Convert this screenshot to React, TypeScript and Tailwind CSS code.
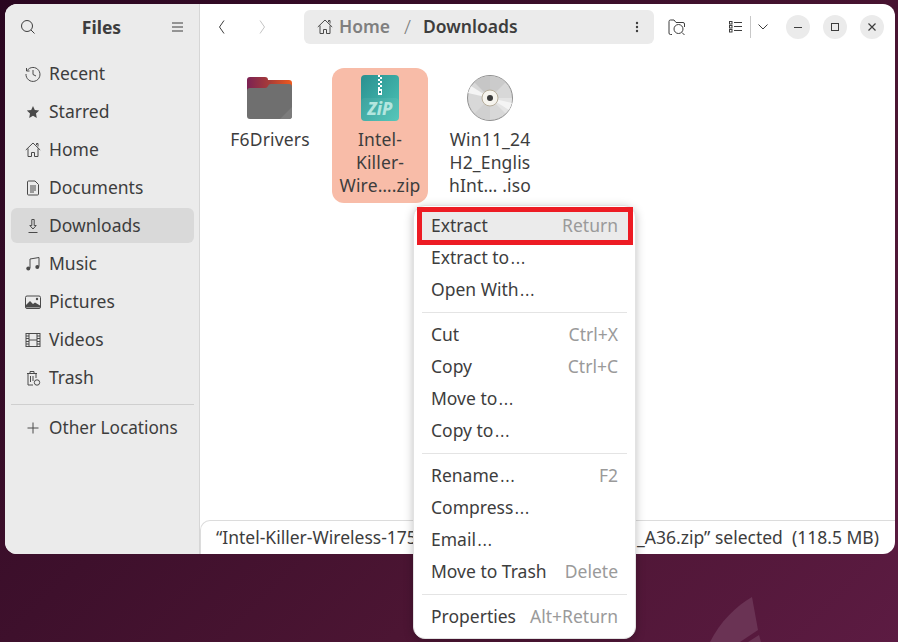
import React from "react";

const FONT = "font-['Noto_Sans',sans-serif]";

function Ico({ children, size = 16 }: { children: React.ReactNode; size?: number }) {
  return (
    <svg width={size} height={size} viewBox="0 0 16 16" fill="none" stroke="#4a4a4a" strokeWidth="1" className="shrink-0">
      {children}
    </svg>
  );
}

const homePaths = (<><path d="M.8 8L8 1l7.200 7" /><path d="M11.500 3V1.500H13V4.500" /><path d="M3 6.500v8h3.500v-4h3v4H13v-8" /></>);

const sideIcons: Record<string, React.ReactNode> = {
  Recent: (<><path d="M2.200 4.500A7 7 0 1 1 1 8" /><path d="M1.500 2v3h3" /><path d="M8 4v4.500l3 1.500" /></>),
  Starred: (<path d="M8 2l1.800 4 4.400.5-3.200 3 .8 4.500L8 11.800 4.200 14l.8-4.500-3.200-3L6.200 6z" fill="#4a4a4a" stroke="none" />),
  Home: homePaths,
  Documents: (<><path d="M2.500 2a1 1 0 0 1 1-1H10l3.500 3.500V14a1 1 0 0 1-1 1h-9a1 1 0 0 1-1-1z" /><path d="M5 6h6M5 8h6M5 10h6M5 12h4" /></>),
  Downloads: (<><path d="M6.800 1.500h2.400v6h2L8 11 4.800 7.500h2z" /><path d="M3.500 14.500h9" /></>),
  Music: (<><path d="M5 12V3l9-1.500V10.500" /><circle cx="3.300" cy="12.500" r="2" fill="#4a4a4a" stroke="none" /><circle cx="12.300" cy="11" r="2" fill="#4a4a4a" stroke="none" /></>),
  Pictures: (<><rect x=".5" y="2" width="15" height="12.500" rx="1.500" /><path d="M1 13.500V11l4-4 3 3 2-1.500 5 3v2z" fill="#4a4a4a" stroke="none" /><circle cx="12" cy="5" r="1.200" fill="#4a4a4a" stroke="none" /></>),
  Videos: (<><rect x="1" y="1.500" width="14" height="13" /><path d="M4 1.500v13M12 1.500v13M4 8h8M1 4h3M1 6.500h3M1 9.500h3M1 12h3M12 4h3M12 6.500h3M12 9.500h3M12 12h3" /></>),
  Trash: (<><path d="M2 3.500h10M5 3.500V1.500h4v2M3 3.500V15h5M11 3.500V8" /><path d="M5.500 6v6M8 6v5" /><circle cx="12" cy="12.500" r="2.700" /></>),
};

const places = ["Recent", "Starred", "Home", "Documents", "Downloads", "Music", "Pictures", "Videos", "Trash"];

function Ell({ text }: { text: string }) {
  const i = text.indexOf("…");
  if (i < 0) return <span>{text}</span>;
  return (
    <span>
      {text.slice(0, i)}
      <span className="text-[21px] font-light leading-[0] mx-[1px]">…</span>
      {text.slice(i + 1)}
    </span>
  );
}

function SideRow({ name }: { name: string }) {
  const on = name === "Downloads";
  return (
    <div className={`h-[35px] mb-[3px] flex items-center pl-[14px] gap-[8px] rounded-[6px] ${on ? "bg-[#d9d9d9]" : ""}`}>
      <Ico>{sideIcons[name]}</Ico>
      <span>{name}</span>
    </div>
  );
}

function FileItem({ icon, lines, selected }: { icon: React.ReactNode; lines: string[]; selected?: boolean }) {
  return (
    <div className={`w-[96px] h-[135px] rounded-[12px] flex flex-col items-center pt-[3px] ${selected ? "bg-[#f8bca8]" : ""}`}>
      <div className="h-[54px] w-[54px] flex items-center justify-center">{icon}</div>
      <div className="mt-[3px] text-center leading-[23px]">
        {lines.map((l) => (<div key={l} className="whitespace-pre h-[23px] tracking-[0.15px]">{l}</div>))}
      </div>
    </div>
  );
}

const FolderIcon = (
  <svg width="48" height="44" viewBox="0 0 48 44">
    <defs>
      <linearGradient id="fb" x1="0" x2="1" y1="0" y2="0">
        <stop offset="0" stopColor="#7b2254" />
        <stop offset=".5" stopColor="#a83c38" />
        <stop offset="1" stopColor="#ee5a1e" />
      </linearGradient>
    </defs>
    <path d="M1 4a3 3 0 0 1 3-3h15a3 3 0 0 1 3 3h21a3 3 0 0 1 3 3v13H1z" fill="url(#fb)" />
    <path d="M1 15a3 3 0 0 1 3-3h15a3 3 0 0 0 3-2 3 3 0 0 1 3-2h18a3 3 0 0 1 3 3v29a3 3 0 0 1-3 3H4a3 3 0 0 1-3-3z" fill="#6f6f6f" />
    <path d="M46 31v9a3 3 0 0 1-3 3H34z" fill="#7c7c7c" />
  </svg>
);

const ZipIcon = (
  <svg width="40" height="48" viewBox="0 0 40 48">
    <defs>
      <linearGradient id="zb" x1="0" x2="1" y1="0" y2="1">
        <stop offset="0" stopColor="#2a9090" />
        <stop offset="1" stopColor="#4cc4b6" />
      </linearGradient>
    </defs>
    <rect x="1" y="1" width="38" height="46" rx="4" fill="url(#zb)" />
    <rect x="1" y="24" width="38" height="23" rx="4" fill="#fff" opacity=".06" />
    <path d="M18 1h2v2h-2zM20 3h2v2h-2zM18 5h2v2h-2zM20 7h2v2h-2zM18 9h2v2h-2zM20 11h2v2h-2zM18 13h2v2h-2z" fill="#fff" />
    <rect x="18" y="15" width="4" height="6" fill="#fff" />
    <rect x="19" y="17" width="2" height="2" fill="#2a8a8a" />
    <text x="20" y="41" textAnchor="middle" fontSize="17" fontWeight="800" fontStyle="italic" fill="#b4e6df" fontFamily="Noto Sans, sans-serif">ZiP</text>
  </svg>
);

const DiscIcon = (
  <svg width="48" height="48" viewBox="0 0 48 48">
    <circle cx="24" cy="24" r="22.500" fill="#d8d8d8" stroke="#8f8f8f" strokeWidth="1" />
    <path d="M24 2a22 22 0 0 1 15.500 6.500L24 24z" fill="#cbcbcb" />
    <path d="M8.500 8.500A22 22 0 0 1 24 2V24z" fill="#c6c6c6" />
    <path d="M46 24a22 22 0 0 1-6.500 15.500L24 24z" fill="#e4e4e4" />
    <path d="M24 46a22 22 0 0 1-15.500-6.500L24 24z" fill="#d0d0d0" />
    <path d="M5 12L24 24 2 19z" fill="#f4f4f4" />
    <path d="M43 36L24 24l22 5z" fill="#f4f4f4" />
    <circle cx="24" cy="24" r="8" fill="#f6f4ee" stroke="#b7ae9c" />
    <circle cx="24" cy="24" r="3" fill="#3c3c3c" />
  </svg>
);

function HeaderIconBtn({ children }: { children: React.ReactNode }) {
  return <div className="w-[24px] h-[24px] rounded-full bg-[#ebebeb] flex items-center justify-center">{children}</div>;
}

type MI = { label: string; key?: string };
const groups: MI[][] = [
  [{ label: "Extract", key: "Return" }, { label: "Extract to…" }, { label: "Open With…" }],
  [{ label: "Cut", key: "Ctrl+X" }, { label: "Copy", key: "Ctrl+C" }, { label: "Move to…" }, { label: "Copy to…" }],
  [{ label: "Rename…", key: "F2" }, { label: "Compress…" }, { label: "Email…" }, { label: "Move to Trash", key: "Delete" }],
  [{ label: "Properties", key: "Alt+Return" }],
];

export default function App() {
  return (
    <div className={`${FONT} relative w-[898px] h-[642px] overflow-hidden pt-[4px] pl-[5px] text-[#3d3d3d] text-[17.5px] bg-[linear-gradient(135deg,#2a0620_0%,#3e102c_42%,#4c1533_67%,#5c1b42_100%)]`}>
      {/* wallpaper shape */}
      <svg className="absolute left-[690px] top-[580px]" width="100" height="62" viewBox="0 0 100 62">
        <path d="M62 17 C46 26 30 42 20 62 L50 62 L68 50 Z" fill="#6a3354" />
        <path d="M58 62 L69 55 L71 62 Z" fill="#6a3354" />
      </svg>

      {/* window */}
      <div className="relative w-[890px] h-[550px] rounded-[12px] overflow-hidden flex bg-white">
        {/* sidebar */}
        <div className="w-[195px] shrink-0 bg-[#ebebeb] border-r border-[#d6d6d6] flex flex-col">
          <div className="h-[46px] flex items-center justify-between pl-[16px] pr-[16px]">
            <svg width="14" height="14" viewBox="0 0 14 14" fill="none" stroke="#3d3d3d" strokeWidth="1"><circle cx="6" cy="6" r="5.500" /><path d="M10 10l3.500 3.500" /></svg>
            <span className="font-bold text-[#3d3d3d] -translate-x-[2px]">Files</span>
            <svg width="11" height="12" viewBox="0 0 11 12" stroke="#3d3d3d" strokeWidth="1"><path d="M0 2h11M0 6h11M0 10h11" /></svg>
          </div>
          <div className="pl-[6px] pr-[5px] pt-[6px]">
            {places.map((p) => (<SideRow key={p} name={p} />))}
            <div className="h-px bg-[#cfcfcf] mt-[9px] mb-[5px]" />
            <div className="h-[36px] flex items-center pl-[14px] gap-[8px]">
              <Ico><path d="M8 2.500v11M2.500 8h11" /></Ico>
              <span className="text-[17.2px]">Other Locations</span>
            </div>
          </div>
        </div>

        {/* main */}
        <div className="flex-1 min-w-0 flex flex-col">
          <div className="h-[46px] shrink-0 flex items-center pl-[18px] pr-[11px]">
            <svg width="8" height="16" viewBox="0 0 8 16" fill="none" stroke="#3d3d3d"><path d="M6 1.500L1.500 8 6 14.500" /></svg>
            <svg className="ml-[32px]" width="8" height="16" viewBox="0 0 8 16" fill="none" stroke="#c4c4c4"><path d="M2 1.500L6.500 8 2 14.500" /></svg>
            <div className="ml-[38px] w-[350px] h-[34px] rounded-[6px] bg-[#ebebeb] flex items-center pl-[13px] pr-[15px]">
              <Ico>{homePaths}</Ico>
              <span className="ml-[6px] font-semibold text-[#7f7f7f] -translate-y-px">Home</span>
              <span className="ml-[14px] text-[#7f7f7f] text-[20px] font-light">/</span>
              <span className="ml-[12px] font-semibold text-[#3d3d3d] -translate-y-px">Downloads</span>
              <svg className="ml-auto" width="4" height="12" viewBox="0 0 4 12" fill="#3d3d3d"><circle cx="2" cy="2" r="1.200" /><circle cx="2" cy="6" r="1.200" /><circle cx="2" cy="10" r="1.200" /></svg>
            </div>
            <svg className="ml-[14px]" width="18" height="17" viewBox="0 0 18 17" fill="none" stroke="#3d3d3d"><path d="M4 15.500H2.500A1.500 1.500 0 0 1 1 14V2.500A1.500 1.500 0 0 1 2.500 1H6l2 2.500h7A1.500 1.500 0 0 1 16.500 5v3" /><circle cx="10.500" cy="10" r="4.500" /><path d="M14 13.500l2.500 2.500" /></svg>
            <svg className="ml-[43px]" width="13" height="12" viewBox="0 0 13 12" fill="none" stroke="#3d3d3d"><rect x=".5" y=".5" width="2.500" height="2.500" /><rect x=".5" y="4.500" width="2.500" height="2.500" /><rect x=".5" y="8.500" width="2.500" height="2.500" /><path d="M5 1.500h8M5 5.500h8M5 9.500h8" /></svg>
            <div className="ml-[8px] w-px h-[22px] bg-[#c8c8c8]" />
            <svg className="ml-[7px]" width="10" height="6" viewBox="0 0 10 6" fill="none" stroke="#3d3d3d"><path d="M.5.500L5 5 9.500.500" /></svg>
            <div className="ml-[18px] flex gap-[13px]">
              <HeaderIconBtn><svg width="8" height="2" viewBox="0 0 8 2"><rect width="8" height="1" y="1" fill="#3d3d3d" /></svg></HeaderIconBtn>
              <HeaderIconBtn><svg width="8" height="8" viewBox="0 0 8 8" fill="none" stroke="#3d3d3d"><rect x=".5" y=".5" width="7" height="7" /></svg></HeaderIconBtn>
              <HeaderIconBtn><svg width="8" height="8" viewBox="0 0 8 8" fill="none" stroke="#3d3d3d" strokeWidth="1.200"><path d="M.5.500l7 7M7.500.500l-7 7" /></svg></HeaderIconBtn>
            </div>
          </div>

          <div className="flex-1 flex items-start gap-[14px] pl-[22px] pt-[18px]">
            <FileItem icon={FolderIcon} lines={["F6Drivers"]} />
            <FileItem icon={ZipIcon} lines={["Intel-", "Killer-", "Wire….zip"]} selected />
            <FileItem icon={DiscIcon} lines={["Win11_24", "H2_Englis", "hInt… .iso"]} />
          </div>

          <div className="h-[34px] shrink-0 border-t border-l border-[#dcdcdc] rounded-tl-[10px] flex items-center justify-between pl-[15px] pr-[16px]">
            <span>“Intel-Killer-Wireless-1750</span>
            <span>_A36.zip” selected&nbsp; (118.5 MB)</span>
          </div>
        </div>
      </div>

      {/* context menu */}
      <div className="absolute left-[413px] top-[205px] w-[223px] h-[434px] rounded-[12px] bg-white border border-[#e2e2e2] shadow-[0_2px_10px_rgba(0,0,0,0.25)] pt-[3px] px-[5px] box-border">
        {groups.map((g, i) => (
          <div key={i}>
            {i > 0 && <div className="h-px bg-[#e4e4e4] mx-[3px] mt-[7px] mb-[5px]" />}
            {g.map((m) => (
              <div key={m.label} className={`h-[32px] flex items-center justify-between px-[12px] rounded-[4px] ${m.label === "Extract" ? "bg-[#ebebeb]" : ""}`}>
                <Ell text={m.label} />
                {m.key && <span className="text-[#9a9a9a]">{m.key}</span>}
              </div>
            ))}
          </div>
        ))}
      </div>
      {/* red annotation */}
      <div className="absolute left-[417px] top-[207px] w-[216px] h-[38px] border-[5px] border-[#ed1c24]" />
    </div>
  );
}
